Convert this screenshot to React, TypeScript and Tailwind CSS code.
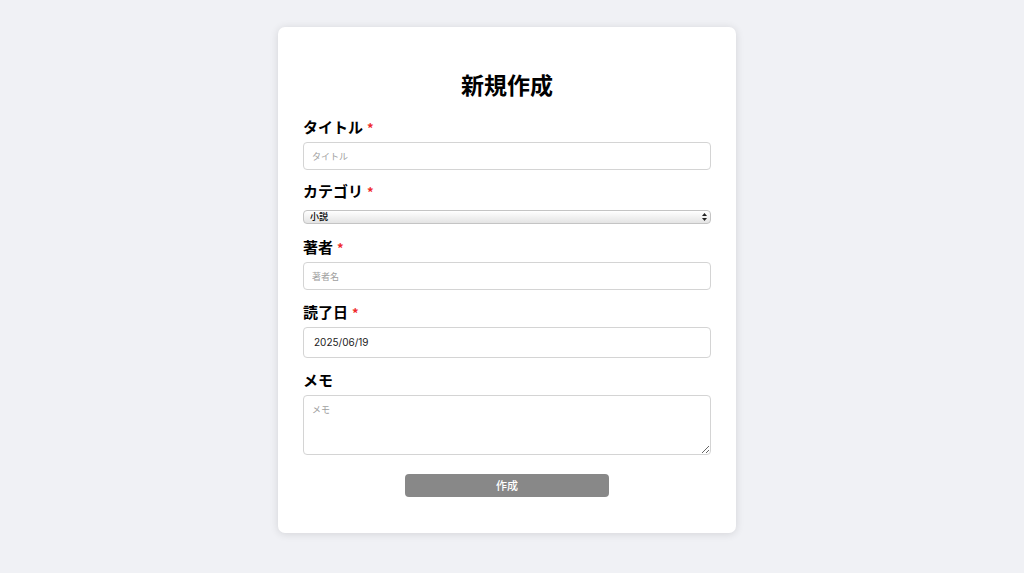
import React from "react";

const font = { fontFamily: '"Noto Sans CJK JP", "Noto Sans", sans-serif' };

function Label({ text, required, className }: { text: string; required?: boolean; className: string }) {
  return (
    <label className={`flex h-4 items-baseline text-[15px] leading-4 font-bold text-black ${className}`}>
      {text}
      {required && <span className="ml-[4px] text-[13px] leading-4 text-[#ef2b2b]">*</span>}
    </label>
  );
}

export default function App() {
  return (
    <div className="min-h-[573px] bg-[#f0f1f5] pt-[27px] pr-[10px]" style={font}>
      <div className="mx-auto w-[458px] rounded-[7px] bg-white px-[25px] pt-[41px] pb-[36px] shadow-[0_1px_8px_rgba(0,0,0,0.12)]">
        <h1 className="mb-[19px] text-center text-[23px] leading-8 font-bold text-black">新規作成</h1>

        <Label text="タイトル" required className="mb-[7px]" />
        <input
          placeholder="タイトル"
          className="mb-[13px] block h-[28px] w-full rounded-[4px] border border-[#d4d4d4] px-[8px] text-[9px] outline-none placeholder:text-[#a0a0a0]"
        />

        <Label text="カテゴリ" required className="mb-[11px]" />
        <div className="relative mb-[15px] h-[14px] w-full">
          <select
            defaultValue="小説"
            className="block h-[14px] w-full appearance-none rounded-[4px] border border-[#c4c4c4] bg-gradient-to-b from-white to-[#e4e4e4] pl-[6px] text-[9px] leading-[12px] font-medium text-black outline-none"
          >
            <option>小説</option>
            <option>ビジネス</option>
            <option>技術書</option>
          </select>
          <svg className="pointer-events-none absolute top-[3px] right-[4px]" width="5" height="8" viewBox="0 0 5 8">
            <path d="M2.5 0 L5 3 L0 3 Z" fill="#222" />
            <path d="M0 5 L5 5 L2.5 8 Z" fill="#222" />
          </svg>
        </div>

        <Label text="著者" required className="mb-[7px]" />
        <input
          placeholder="著者名"
          className="mb-[14px] block h-[28px] w-full rounded-[4px] border border-[#d4d4d4] px-[8px] text-[9px] outline-none placeholder:text-[#a0a0a0]"
        />

        <Label text="読了日" required className="mb-[7px]" />
        <div
          className="mb-[14px] flex h-[31px] w-full items-center rounded-[4px] border border-[#d4d4d4] px-[10px] text-[10px] text-[#222]"
          style={{ fontFamily: 'Inter, "Liberation Sans", sans-serif' }}
        >
          2025/06/19
        </div>

        <Label text="メモ" className="mb-[7px]" />
        <textarea
          placeholder="メモ"
          className="mb-[19px] block h-[60px] w-full resize-y rounded-[4px] border border-[#d4d4d4] px-[8px] py-[7px] text-[9px] outline-none placeholder:text-[#a0a0a0]"
        />

        <div className="flex justify-center">
          <button className="h-[23px] w-[204px] rounded-[4px] bg-[#888888] text-[11px] font-medium text-white">
            作成
          </button>
        </div>
      </div>
    </div>
  );
}
